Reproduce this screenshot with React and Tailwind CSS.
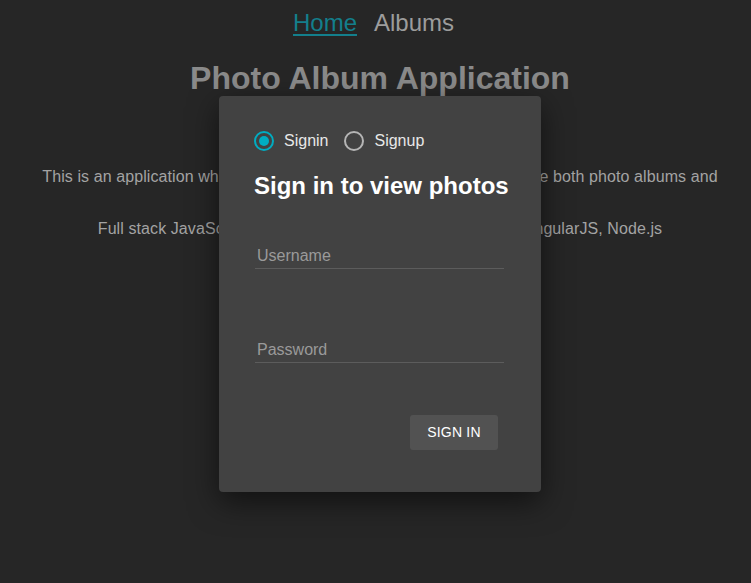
import { useState } from 'react';

const Radio = ({ checked, label, onClick }) => (
  <button onClick={onClick} className="flex items-center gap-[10px] text-[16px] leading-6 text-[#e8e8e8]">
    <span
      className={`flex h-5 w-5 items-center justify-center rounded-full border-2 ${
        checked ? 'border-[#00acc1]' : 'border-[#b5b5b5]'
      }`}
    >
      {checked && <span className="h-[10px] w-[10px] rounded-full bg-[#00acc1]" />}
    </span>
    {label}
  </button>
);

const App = () => {
  const [mode, setMode] = useState('signin');

  return (
    <div className="relative h-[583px] w-full overflow-hidden bg-[#262626] font-['Liberation_Sans',Arial,sans-serif]">
      {/* Page behind the dialog */}
      <div className="flex flex-col items-center pt-[7px] text-center">
        <nav className="mr-[4px] flex gap-[17px] text-[24px] leading-8">
          <a className="text-[#137f8c] underline underline-offset-[3px] decoration-[2px]">Home</a>
          <a className="text-[#9c9c9c]">Albums</a>
        </nav>
        <div className="flex flex-col items-center pl-[9px]">
          <h1 className="mt-[19px] text-[32px] font-bold leading-10 text-[#8a8a8a]">Photo Album Application</h1>
          <p className="mt-[67px] text-[16px] leading-6 tracking-[0.09px] text-[#a3a3a3]">
            This is an application which allows users to create, organize and share both photo albums and
          </p>
          <p className="mt-[28px] text-[16px] leading-6 tracking-[0.09px] text-[#a3a3a3]">
            Full stack JavaScript application using MongoDB, Express, AngularJS, Node.js
          </p>
        </div>
      </div>

      {/* Dialog */}
      <div className="absolute left-[219px] top-[96px] flex w-[322px] flex-col rounded-[4px] bg-[#424242] pl-[35px] pr-[37px] pt-[33px] pb-[42px] shadow-[0_10px_30px_rgba(0,0,0,0.55)]">
        <div className="flex gap-4">
          <Radio checked={mode === 'signin'} label="Signin" onClick={() => setMode('signin')} />
          <Radio checked={mode === 'signup'} label="Signup" onClick={() => setMode('signup')} />
        </div>
        <h2 className="mt-[17px] whitespace-nowrap text-[24px] font-bold leading-8 text-white">Sign in to view photos</h2>

        <input
          placeholder="Username"
          className="ml-[1px] mt-[42px] h-[25px] border-b border-[#5c5c5c] bg-transparent pl-[2px] text-[16px] leading-6 text-white outline-none placeholder:text-[#9a9a9a]"
        />
        <input
          type="password"
          placeholder="Password"
          className="ml-[1px] mt-[69px] h-[25px] border-b border-[#5c5c5c] bg-transparent pl-[2px] text-[16px] leading-6 text-white outline-none placeholder:text-[#9a9a9a]"
        />

        <div className="mt-[52px] flex justify-end pr-[6px]">
          <button className="h-[35px] w-[88px] rounded-[3px] bg-[#525252] text-[14px] font-medium tracking-[0.2px] text-white">
            SIGN IN
          </button>
        </div>
      </div>
    </div>
  );
};

export default App;
